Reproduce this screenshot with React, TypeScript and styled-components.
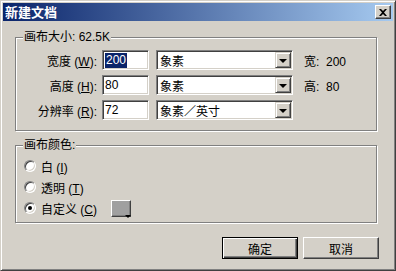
import React from 'react'
import styled, { createGlobalStyle } from 'styled-components'

const Global = createGlobalStyle`
  html, body {
    margin: 0;
    padding: 0;
    background: #d4d0c8;
  }
  body {
    font-family: "Liberation Sans", "Noto Sans CJK SC", sans-serif;
    font-size: 12px;
    color: #000;
  }
`

const Window = styled.div`
  width: 396px;
  height: 271px;
  box-sizing: border-box;
  background: #d4d0c8;
  border: 1px solid;
  border-color: #d4d0c8 #404040 #404040 #d4d0c8;
  box-shadow: inset 1px 1px 0 #fff, inset -1px -1px 0 #808080;
  padding: 2px;
  display: flex;
  flex-direction: column;
`

const TitleBar = styled.div`
  height: 18px;
  flex: none;
  display: flex;
  align-items: center;
  justify-content: space-between;
  padding: 0 2px;
  background: linear-gradient(90deg, #0a246a 0%, #a6caf0 100%);
  color: #fff;
  font-weight: bold;
  font-family: "Noto Sans CJK SC", sans-serif;
  font-size: 13px;
  line-height: 18px;
`

const raised = `
  border: 1px solid;
  border-color: #fff #404040 #404040 #fff;
  box-shadow: inset -1px -1px 0 #808080;
`

const sunken = `
  border: 1px solid;
  border-color: #808080 #fff #fff #808080;
  box-shadow: inset 1px 1px 0 #404040, inset -1px -1px 0 #d4d0c8;
`

const CloseButton = styled.div`
  width: 16px;
  height: 14px;
  box-sizing: border-box;
  background: #d4d0c8;
  ${raised}
  display: flex;
  align-items: center;
  justify-content: center;
`

const Body = styled.div`
  display: flex;
  flex-direction: column;
  padding: 0 14px 0 12px;
`

const Group = styled.div<{ $top: number; $height: number }>`
  position: relative;
  width: 362px;
  height: ${p => p.$height}px;
  box-sizing: border-box;
  margin-top: ${p => p.$top}px;
  border: 1px solid #808080;
  box-shadow: inset 1px 1px 0 #fff, 1px 1px 0 #fff;
`

const GroupTitle = styled.span`
  position: absolute;
  top: -8px;
  left: 7px;
  padding: 0 1px;
  background: #d4d0c8;
  line-height: 15px;
  white-space: pre;
`

const Rows = styled.div`
  display: flex;
  flex-direction: column;
  gap: 5px;
  padding-top: 12px;
`

const Row = styled.div`
  display: flex;
  align-items: center;
  height: 20px;
`

const Label = styled.div`
  width: 84px;
  box-sizing: border-box;
  padding-right: 3px;
  text-align: right;
  white-space: pre;
`

const TextBox = styled.div`
  width: 47px;
  height: 20px;
  box-sizing: border-box;
  margin-left: 2px;
  background: #fff;
  ${sunken}
  padding-left: 2px;
  display: flex;
  align-items: center;
`

const Selected = styled.span`
  background: #0a246a;
  color: #fff;
  line-height: 15px;
  padding: 0 1px 0 1px;
`

const Select = styled.div`
  width: 137px;
  height: 20px;
  box-sizing: border-box;
  margin-left: 7px;
  background: #fff;
  ${sunken}
  padding: 0 1px 0 3px;
  display: flex;
  align-items: center;
  justify-content: space-between;
  font-family: "Noto Sans CJK SC", sans-serif;
`

const DropButton = styled.div`
  width: 16px;
  height: 16px;
  box-sizing: border-box;
  background: #d4d0c8;
  border: 1px solid;
  border-color: #d4d0c8 #404040 #404040 #d4d0c8;
  box-shadow: inset 1px 1px 0 #fff, inset -1px -1px 0 #808080;
  display: flex;
  align-items: center;
  justify-content: center;
`

const Arrow = styled.span`
  width: 0;
  height: 0;
  border-left: 4px solid transparent;
  border-right: 4px solid transparent;
  border-top: 4px solid #000;
  margin-top: 1px;
`

const Info = styled.div`
  margin-left: 11px;
  white-space: pre;
`

const Radios = styled.div`
  display: flex;
  flex-direction: column;
  gap: 1px;
  padding-top: 10px;
`

const RadioRow = styled.div`
  display: flex;
  align-items: center;
  height: 20px;
  padding-left: 8px;
`

const RadioCircle = styled.span<{ $checked?: boolean }>`
  width: 12px;
  height: 12px;
  box-sizing: border-box;
  border-radius: 50%;
  background: #fff;
  border: 1px solid;
  border-color: #808080 #fff #fff #808080;
  box-shadow: inset 1px 1px 0 #404040, inset -1px -1px 0 #d4d0c8;
  display: flex;
  align-items: center;
  justify-content: center;
  &::after {
    content: '';
    display: ${p => (p.$checked ? 'block' : 'none')};
    width: 4px;
    height: 4px;
    border-radius: 50%;
    background: #000;
  }
`

const RadioLabel = styled.span<{ $width?: number }>`
  margin-left: 5px;
  white-space: pre;
  width: ${p => (p.$width ? `${p.$width}px` : 'auto')};
`

const Swatch = styled.div`
  position: relative;
  width: 20px;
  height: 17px;
  box-sizing: border-box;
  margin-left: 8px;
  background: #a0a0a0;
  border: 1px solid;
  border-color: #fff #404040 #404040 #fff;
  box-shadow: inset -1px -1px 0 #808080;
`

const SwatchArrow = styled.span`
  position: absolute;
  right: -1px;
  bottom: -2px;
  width: 0;
  height: 0;
  border-left: 3px solid transparent;
  border-right: 3px solid transparent;
  border-top: 3px solid #000;
`

const Buttons = styled.div`
  display: flex;
  justify-content: flex-end;
  gap: 5px;
  margin-top: 14px;
`

const Button = styled.div<{ $default?: boolean }>`
  width: 76px;
  height: 22px;
  box-sizing: border-box;
  display: flex;
  align-items: center;
  justify-content: center;
  font-family: "Noto Sans CJK SC", sans-serif;
  background: #d4d0c8;
  border: 1px solid;
  border-color: ${p => (p.$default ? '#000' : '#fff #404040 #404040 #fff')};
  box-shadow: ${p =>
    p.$default
      ? 'inset 1px 1px 0 #fff, inset -1px -1px 0 #404040, inset -2px -2px 0 #808080'
      : 'inset -1px -1px 0 #808080'};
`

const Key = ({ k }: { k: string }) => (
  <span>
    (<u>{k}</u>)
  </span>
)

export default function App() {
  return (
    <>
      <Global />
      <Window>
        <TitleBar>
          <span>新建文档</span>
          <CloseButton>
            <svg width="8" height="7" viewBox="0 0 8 7">
              <path d="M0 0h2l2 2 2-2h2L5 3.5 8 7H6L4 5 2 7H0l3-3.5z" fill="#000" />
            </svg>
          </CloseButton>
        </TitleBar>
        <Body>
          <Group $top={16} $height={94}>
            <GroupTitle>画布大小: 62.5K</GroupTitle>
            <Rows>
              <Row>
                <Label>宽度 <Key k="W" />:</Label>
                <TextBox><Selected>200</Selected></TextBox>
                <Select>
                  <span>象素</span>
                  <DropButton><Arrow /></DropButton>
                </Select>
                <Info>宽:  200</Info>
              </Row>
              <Row>
                <Label>高度 <Key k="H" />:</Label>
                <TextBox>80</TextBox>
                <Select>
                  <span>象素</span>
                  <DropButton><Arrow /></DropButton>
                </Select>
                <Info>高:  80</Info>
              </Row>
              <Row>
                <Label>分辨率 <Key k="R" />:</Label>
                <TextBox>72</TextBox>
                <Select>
                  <span>象素／英寸</span>
                  <DropButton><Arrow /></DropButton>
                </Select>
              </Row>
            </Rows>
          </Group>
          <Group $top={14} $height={78}>
            <GroupTitle>画布颜色:</GroupTitle>
            <Radios>
              <RadioRow>
                <RadioCircle />
                <RadioLabel>白 <Key k="I" /></RadioLabel>
              </RadioRow>
              <RadioRow>
                <RadioCircle />
                <RadioLabel>透明 <Key k="T" /></RadioLabel>
              </RadioRow>
              <RadioRow>
                <RadioCircle $checked />
                <RadioLabel $width={62}>自定义 <Key k="C" /></RadioLabel>
                <Swatch><SwatchArrow /></Swatch>
              </RadioRow>
            </Radios>
          </Group>
          <Buttons>
            <Button $default>确定</Button>
            <Button>取消</Button>
          </Buttons>
        </Body>
      </Window>
    </>
  )
}
